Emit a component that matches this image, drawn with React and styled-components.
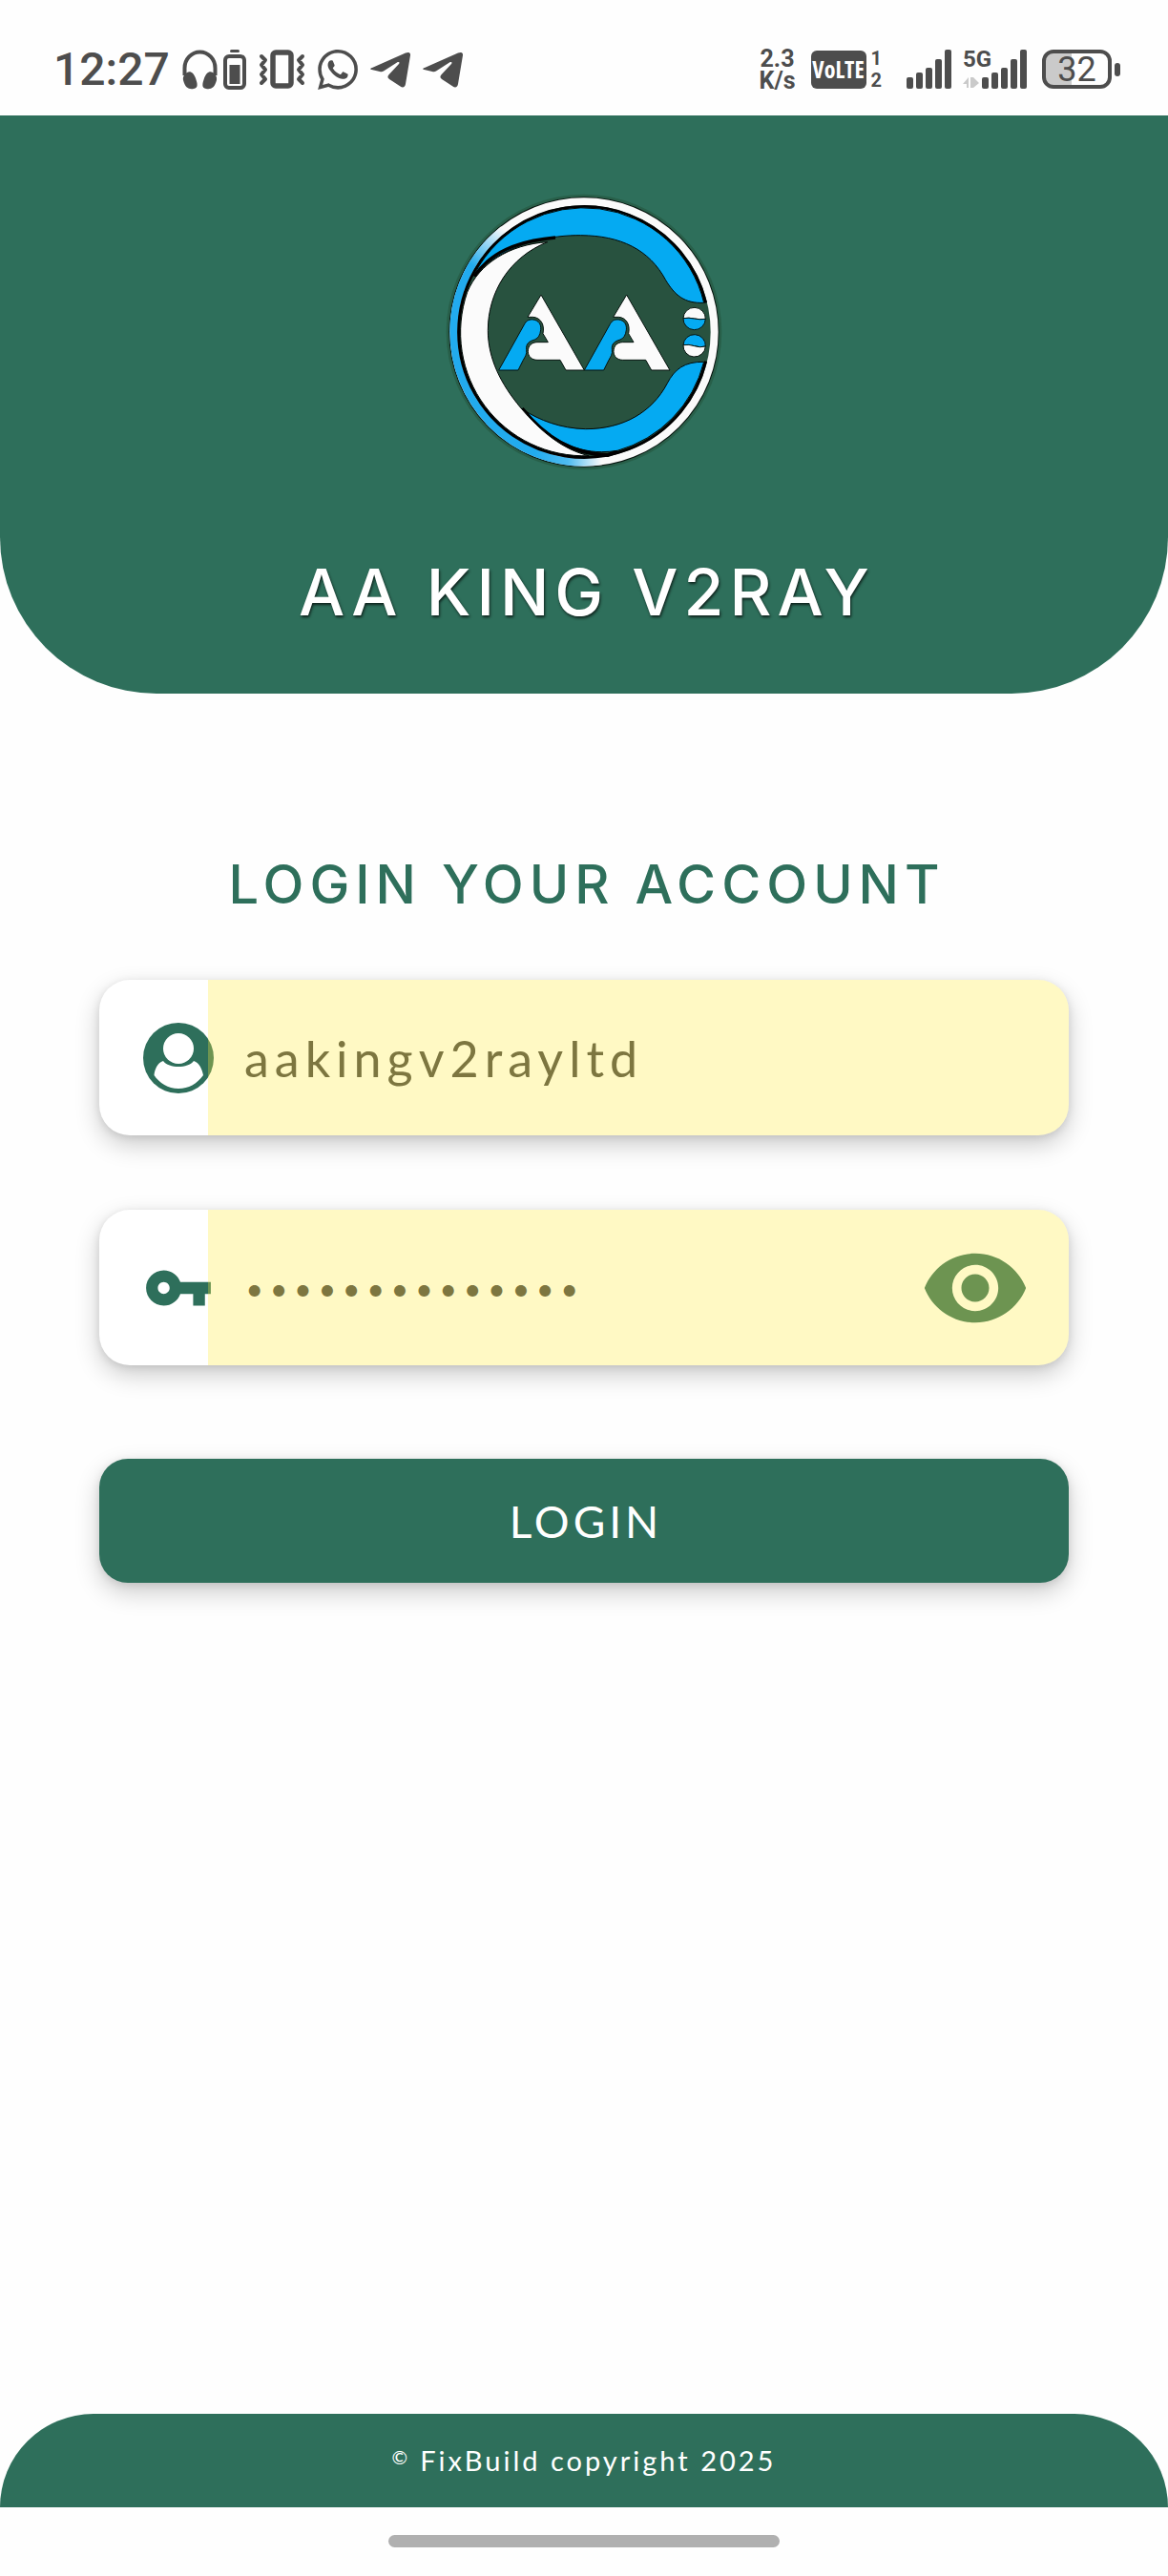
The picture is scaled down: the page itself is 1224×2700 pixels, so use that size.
import React, { useState } from "react";
import styled, { createGlobalStyle } from "styled-components";

const GREEN = "#2e6f5b";
const INK = "#4d4d4d";

const GlobalStyle = createGlobalStyle`
  *, *::before, *::after { box-sizing: border-box; }
  body { margin: 0; background: #fefefe; }
  button, input { font: inherit; }
`;

const Page = styled.div`
  min-height: 100vh;
  display: flex;
  flex-direction: column;
  background: #fefefe;
  font-family: Lato, "Liberation Sans", sans-serif;
`;

/* ---------- status bar ---------- */

const StatusBar = styled.div`
  height: 121px;
  padding: 24px 50px 0 56px;
  display: flex;
  align-items: center;
  justify-content: space-between;
  color: ${INK};
  font-family: Roboto, "Liberation Sans", sans-serif;
`;

const StatusGroup = styled.div`
  display: flex;
  align-items: center;
  gap: ${(p) => p.$gap}px;
`;

const Clock = styled.span`
  font-size: 48px;
  line-height: 48px;
  font-weight: 500;
  width: 122px;
`;

const StatusIcon = styled.svg`
  display: block;
  height: 42px;
  width: ${(p) => p.$w}px;
  fill: ${INK};
`;

const Stack = styled.span`
  display: flex;
  flex-direction: column;
  align-items: ${(p) => p.$align || "flex-start"};
  font-size: ${(p) => p.$size}px;
  line-height: 23px;
  font-weight: 700;
`;

const VolteGroup = styled(StatusGroup)`
  margin-right: 10px;
`;

const Volte = styled.span`
  width: 58px;
  height: 40px;
  border-radius: 6px;
  background: ${INK};
  color: #fff;
  font-family: "Liberation Sans Narrow", "Open Sans", sans-serif;
  font-size: 24px;
  line-height: 40px;
  font-weight: 700;
  font-stretch: condensed;
  text-align: center;
`;

const Network = styled.span`
  position: relative;
  display: block;
`;

const NetworkLabel = styled.span`
  position: absolute;
  left: 0;
  top: 0;
  font-size: 24px;
  line-height: 20px;
  font-weight: 700;
`;

const Battery = styled.span`
  display: flex;
  align-items: center;
  gap: 3px;
`;

const BatteryBody = styled.span`
  width: 73px;
  height: 41px;
  border: 4px solid ${INK};
  border-radius: 12px;
  background: linear-gradient(to right, #cacaca 42%, #fefefe 42%);
  font-size: 36px;
  line-height: 34px;
  text-align: center;
`;

const BatteryTip = styled.span`
  width: 6px;
  height: 14px;
  border-radius: 3px;
  background: ${INK};
`;

/* ---------- header ---------- */

const Header = styled.header`
  display: flex;
  flex-direction: column;
  align-items: center;
  gap: 84px;
  padding: 78px 24px 68px;
  border-radius: 0 0 164px 164px;
  background: ${GREEN};
`;

const Logo = styled.svg`
  display: block;
  width: 298px;
  height: 298px;
`;

const Title = styled.h1`
  margin: 0;
  padding-left: 6px;
  color: #fff;
  font-family: Inter, "Liberation Sans", sans-serif;
  font-size: 68px;
  line-height: 78px;
  font-weight: 500;
  letter-spacing: 6px;
  text-shadow: 1px 2px 3px rgba(0, 0, 0, 0.7);
`;

/* ---------- form ---------- */

const Form = styled.form`
  flex: 1;
  display: flex;
  flex-direction: column;
  padding: 166px 104px 64px;
`;

const FormTitle = styled.h2`
  margin: 0 0 66px;
  padding-left: 6px;
  color: ${GREEN};
  font-family: Inter, "Liberation Sans", sans-serif;
  font-size: 56px;
  line-height: 68px;
  font-weight: 500;
  letter-spacing: 6px;
  text-align: center;
`;

const Field = styled.div`
  position: relative;
  display: flex;
  align-items: center;
  height: 163px;
  margin-bottom: 78px;
  padding: 0 40px 0 46px;
  border-radius: 32px;
  background: #fff;
  overflow: hidden;
  box-shadow: 0 10px 26px rgba(0, 0, 0, 0.2), 0 2px 8px rgba(0, 0, 0, 0.1);

  &::after {
    content: "";
    position: absolute;
    inset: 0 0 0 114px;
    background: rgba(255, 235, 59, 0.3);
    pointer-events: none;
  }
`;

const FieldLabel = styled.label`
  flex: none;
  width: 74px;
  height: 74px;
`;

const FieldIcon = styled.svg`
  display: block;
  width: 74px;
  height: 74px;
  fill: ${GREEN};
`;

const Input = styled.input`
  flex: 1;
  min-width: 0;
  height: 100%;
  padding: 0 0 0 32px;
  border: 0;
  outline: 0;
  background: transparent;
  color: #454442;
  font-family: ${(p) => (p.type === "password" ? "Inter" : "Lato")}, "Liberation Sans", sans-serif;
  font-size: ${(p) => (p.type === "password" ? 38 : 52)}px;
  letter-spacing: ${(p) => (p.type === "password" ? 4 : 6)}px;
`;

const EyeButton = styled.button`
  flex: none;
  width: 116px;
  height: 116px;
  padding: 0;
  border: 0;
  background: transparent;
  cursor: pointer;
`;

const EyeIcon = styled.svg`
  display: block;
  width: 116px;
  height: 116px;
  fill: ${GREEN};
`;

const LoginButton = styled.button`
  height: 130px;
  margin-top: 20px;
  padding: 0 0 0 4px;
  border: 0;
  border-radius: 30px;
  background: ${GREEN};
  color: #fff;
  font-size: 46px;
  letter-spacing: 4px;
  cursor: pointer;
  box-shadow: 0 10px 26px rgba(0, 0, 0, 0.2), 0 2px 8px rgba(0, 0, 0, 0.1);
`;

/* ---------- footer ---------- */

const Footer = styled.footer`
  display: flex;
  align-items: center;
  justify-content: center;
  height: 98px;
  border-radius: 98px 98px 0 0;
  background: ${GREEN};
  color: #fff;
  font-size: 29px;
  line-height: 36px;
  letter-spacing: 3px;
`;

const Mark = styled.span`
  align-self: center;
  margin-right: 10px;
  padding-bottom: 8px;
  font-size: 20px;
`;

const NavArea = styled.div`
  display: flex;
  justify-content: center;
  height: 72px;
  padding-top: 29px;
`;

const NavPill = styled.span`
  width: 410px;
  height: 13px;
  border-radius: 7px;
  background: #b0b0b0;
`;

/* ---------- drawings ---------- */

const Headphones = () => (
  <StatusIcon $w={37} viewBox="0 0 37 42">
    <path d="M2.5 27V19.500A16 17 0 0 1 34.500 19.500V27" fill="none" stroke={INK} strokeWidth="4" />
    <path d="M5 24c4-2 7 1 9 6 2 6 3 10-2 11-5 1-9-1-11-9-.6-3 1-6.500 4-8zM32 24c-4-2-7 1-9 6-2 6-3 10 2 11 5 1 9-1 11-9 .6-3-1-6.500-4-8z" />
  </StatusIcon>
);

const SmallBattery = () => (
  <StatusIcon $w={24} viewBox="0 0 24 42">
    <rect x="7" y="0" width="10" height="3" rx="1.500" />
    <rect x="2" y="7" width="20" height="33" rx="4" fill="none" stroke={INK} strokeWidth="4" />
    <rect x="6.500" y="16" width="11" height="20" />
  </StatusIcon>
);

const Vibrate = () => (
  <StatusIcon $w={49} viewBox="0 0 49 42">
    <rect x="15" y="3" width="19" height="35" rx="3" fill="none" stroke={INK} strokeWidth="5.500" />
    <path
      d="M3 7l4 4-4 5 4 5-4 5 4 5-4 4M46 7l-4 4 4 5-4 5 4 5-4 5 4 4"
      fill="none"
      stroke={INK}
      strokeWidth="4"
      strokeLinecap="round"
      strokeLinejoin="round"
    />
  </StatusIcon>
);

const WhatsApp = () => (
  <StatusIcon $w={42} viewBox="0 0 24 24">
    <path d="M17.472 14.382c-.297-.149-1.758-.867-2.030-.967-.273-.099-.471-.148-.670.150-.197.297-.767.966-.940 1.164-.173.199-.347.223-.644.075-.297-.150-1.255-.463-2.390-1.475-.883-.788-1.480-1.761-1.653-2.059-.173-.297-.018-.458.130-.606.134-.133.298-.347.446-.520.149-.174.198-.298.298-.497.099-.198.050-.371-.025-.520-.075-.149-.669-1.612-.916-2.207-.242-.579-.487-.500-.669-.510-.173-.008-.371-.010-.570-.010-.198 0-.520.074-.792.372-.272.297-1.040 1.016-1.040 2.479 0 1.462 1.065 2.875 1.213 3.074.149.198 2.096 3.200 5.077 4.487.709.306 1.262.489 1.694.625.712.227 1.360.195 1.871.118.571-.085 1.758-.719 2.006-1.413.248-.694.248-1.289.173-1.413-.074-.124-.272-.198-.570-.347m-5.421 7.403h-.004a9.870 9.870 0 01-5.031-1.378l-.361-.214-3.741.982.998-3.648-.235-.374a9.860 9.860 0 01-1.510-5.260c.001-5.450 4.436-9.884 9.888-9.884 2.640 0 5.122 1.030 6.988 2.898a9.825 9.825 0 012.893 6.994c-.003 5.450-4.437 9.884-9.885 9.884m8.413-18.297A11.815 11.815 0 0012.050 0C5.495 0 .160 5.335.157 11.892c0 2.096.547 4.142 1.588 5.945L.057 24l6.305-1.654a11.882 11.882 0 005.683 1.448h.005c6.554 0 11.890-5.335 11.893-11.893a11.821 11.821 0 00-3.480-8.413z" />
  </StatusIcon>
);

const Telegram = () => (
  <StatusIcon $w={42} viewBox="0 0 42 42">
    <path d="M2 19L37 3.500c3-1.200 5.500-.5 5 2.500L37 36c-.5 3.500-3 4.500-5.500 2.500L20 31c-2-1.300-2-3-.5-4.800L30 15c1.500-2-.5-2.500-2-1.500L14 22.500c-1.200.8-2.800.8-4 .4L1.500 21c-2-.4-1.500-1.300.5-2z" />
  </StatusIcon>
);

const bars = [
  [29, 12],
  [24, 17],
  [19, 22],
  [10, 31],
  [0, 41],
];

const Signal = ({ offset = 0 }) => (
  <StatusIcon $w={47 + offset} viewBox={`0 0 ${47 + offset} 42`} aria-hidden="true">
    {bars.map(([y, h], i) => (
      <rect key={i} x={offset + i * 10} y={y} width="7" height={h} rx="2" />
    ))}
    {offset > 0 && <path d="M0 36l6-7v11H4v-4zM8 29h3v11H8zM11 29l6 6-6 5z" fill="#cacaca" />}
  </StatusIcon>
);

const Limb = ({ x }) => (
  <g transform={`translate(${x} 0)`} stroke="#06130e" strokeWidth="3" strokeLinejoin="round">
    <path
      fill="#fbfbfb"
      d="M350 358L486 595H428L410 563H338C320 563 309 551 309 536C309 518 321 507 338 507H372L356 480C362 450 348 430 325 428H308Z"
    />
    <path
      fill="#05aaf2"
      d="M217 595L298 450C305 437 315 435 325 436C343 438 351 452 349 468C347 484 342 494 330 499C312 504 302 512 304 530C306 545 300 552 294 563L278 595Z"
    />
  </g>
);

const BrandLogo = () => (
  <Logo viewBox="38 28 894 894" role="img" aria-label="AA King logo">
    <defs>
      <linearGradient id="ring" x1="330" y1="0" x2="540" y2="0" gradientUnits="userSpaceOnUse">
        <stop offset="0" stopColor="#22abee" />
        <stop offset="0.500" stopColor="#4fbcf1" />
        <stop offset="1" stopColor="#fafafa" />
      </linearGradient>
      <linearGradient id="ringTop" x1="140" y1="270" x2="232" y2="152" gradientUnits="userSpaceOnUse">
        <stop offset="0" stopColor="#22abee" />
        <stop offset="1" stopColor="#fafafa" />
      </linearGradient>
    </defs>
    <circle cx="485" cy="475" r="433" fill="#285f49" />
    <circle cx="485" cy="475" r="425" fill="#07130e" />
    <circle cx="485" cy="475" r="410" fill="#28523f" stroke="#fafafa" strokeWidth="24" />
    <path d="M232 152A410 410 0 0 0 75 475" fill="none" stroke="url(#ringTop)" strokeWidth="24" />
    <path d="M75 473A410 410 0 0 0 540 881" fill="none" stroke="url(#ring)" strokeWidth="24" />
    <path d="M868 383A394 394 0 1 0 868 567" fill="none" stroke="#000" strokeWidth="9" />
    <g stroke="#020806" strokeWidth="3" strokeLinejoin="round">
      <path
        fill="#05aaf2"
        d="M142 290A388 388 0 0 1 862 383C800 386 770 358 742 312C690 215 600 172 475 171C390 170 250 190 142 290Z"
      />
      <path
        fill="#05aaf2"
        d="M862 569C800 568 770 592 747 636C700 726 610 780 490 780C410 778 345 752 295 720C370 805 450 852 540 852Q565 852 590 848A388 388 0 0 0 862 569Z"
      />
    </g>
    <path d="M140 300C190 225 270 190 395 178" fill="none" stroke="#000" strokeWidth="10" />
    <path d="M290 716C365 810 450 858 560 862L590 852" fill="none" stroke="#000" strokeWidth="12" />
    <path
      fill="#fbfbfb"
      stroke="#020806"
      strokeWidth="3"
      d="M370 192C250 200 155 260 118 350A388 388 0 0 0 500 864C420 845 350 790 285 712C225 640 183 560 183 470C183 350 250 240 370 192Z"
    />
    <Limb x={0} />
    <Limb x={269} />
    <g stroke="#06130e" strokeWidth="3">
      <path fill="#fbfbfb" d="M797 432A35 35 0 0 1 867 434Q850 437 832 433Q815 429 797 432Z" />
      <path fill="#05aaf2" d="M797 432A35 35 0 0 0 867 434Q850 437 832 433Q815 429 797 432Z" />
      <path fill="#05aaf2" d="M797 516A35 35 0 0 1 867 520Q850 525 832 519Q815 513 797 516Z" />
      <path fill="#fbfbfb" d="M797 516A35 35 0 0 0 867 520Q850 525 832 519Q815 513 797 516Z" />
    </g>
  </Logo>
);

const UserIcon = () => (
  <FieldIcon viewBox="0 0 74 74" aria-hidden="true">
    <circle cx="37" cy="37" r="37" />
    <ellipse cx="37" cy="27" rx="16" ry="16" fill="#fff" />
    <path d="M21 40C27 48 47 48 53 40C59 42 62 49 63 55C56 64 48 69 37 69S17 63 11.500 55C12 49 15 42 21 40Z" fill="#fff" />
  </FieldIcon>
);

const KeyIcon = () => (
  <FieldIcon viewBox="0 0 24 24" aria-hidden="true">
    <path d="M12.650 10C11.830 7.670 9.610 6 7 6c-3.310 0-6 2.690-6 6s2.690 6 6 6c2.610 0 4.830-1.670 5.650-4H17v4h4v-4h2v-4H12.650zM7 14c-1.100 0-2-.9-2-2s.9-2 2-2 2 .9 2 2-.9 2-2 2z" />
  </FieldIcon>
);

export default function App() {
  const [user, setUser] = useState("aakingv2rayltd");
  const [password, setPassword] = useState("12345678901234");
  const [visible, setVisible] = useState(false);

  return (
    <Page>
      <GlobalStyle />
      <StatusBar>
        <StatusGroup $gap={13}>
          <Clock>12:27</Clock>
          <StatusGroup $gap={6}>
            <Headphones />
            <SmallBattery />
          </StatusGroup>
          <Vibrate />
          <WhatsApp />
          <Telegram />
          <Telegram />
        </StatusGroup>
        <StatusGroup $gap={16}>
          <Stack $size={25} $align="center">
            <span>2.3</span>
            <span>K/s</span>
          </Stack>
          <VolteGroup $gap={5}>
            <Volte>VoLTE</Volte>
            <Stack $size={20}>
              <span>1</span>
              <span>2</span>
            </Stack>
          </VolteGroup>
          <StatusGroup $gap={12}>
            <Signal />
            <Network>
              <Signal offset={20} />
              <NetworkLabel>5G</NetworkLabel>
            </Network>
          </StatusGroup>
          <Battery>
            <BatteryBody>32</BatteryBody>
            <BatteryTip />
          </Battery>
        </StatusGroup>
      </StatusBar>

      <Header>
        <BrandLogo />
        <Title>AA KING V2RAY</Title>
      </Header>

      <Form onSubmit={(e) => e.preventDefault()}>
        <FormTitle>LOGIN YOUR ACCOUNT</FormTitle>
        <Field>
          <FieldLabel htmlFor="user" aria-label="Username">
            <UserIcon />
          </FieldLabel>
          <Input id="user" type="text" value={user} onChange={(e) => setUser(e.target.value)} />
        </Field>
        <Field>
          <FieldLabel htmlFor="password" aria-label="Password">
            <KeyIcon />
          </FieldLabel>
          <Input
            id="password"
            type={visible ? "text" : "password"}
            value={password}
            onChange={(e) => setPassword(e.target.value)}
          />
          <EyeButton type="button" aria-label="Show password" onClick={() => setVisible(!visible)}>
            <EyeIcon viewBox="0 0 24 24">
              <path d="M12 4.500C7 4.500 2.730 7.610 1 12c1.730 4.390 6 7.500 11 7.500s9.270-3.110 11-7.500c-1.730-4.390-6-7.500-11-7.500zM12 17c-2.760 0-5-2.240-5-5s2.240-5 5-5 5 2.240 5 5-2.240 5-5 5zm0-8c-1.660 0-3 1.340-3 3s1.340 3 3 3 3-1.340 3-3-1.340-3-3-3z" />
            </EyeIcon>
          </EyeButton>
        </Field>
        <LoginButton type="submit">LOGIN</LoginButton>
      </Form>

      <Footer>
        <Mark>©</Mark>
        <span>FixBuild copyright 2025</span>
      </Footer>
      <NavArea>
        <NavPill />
      </NavArea>
    </Page>
  );
}
